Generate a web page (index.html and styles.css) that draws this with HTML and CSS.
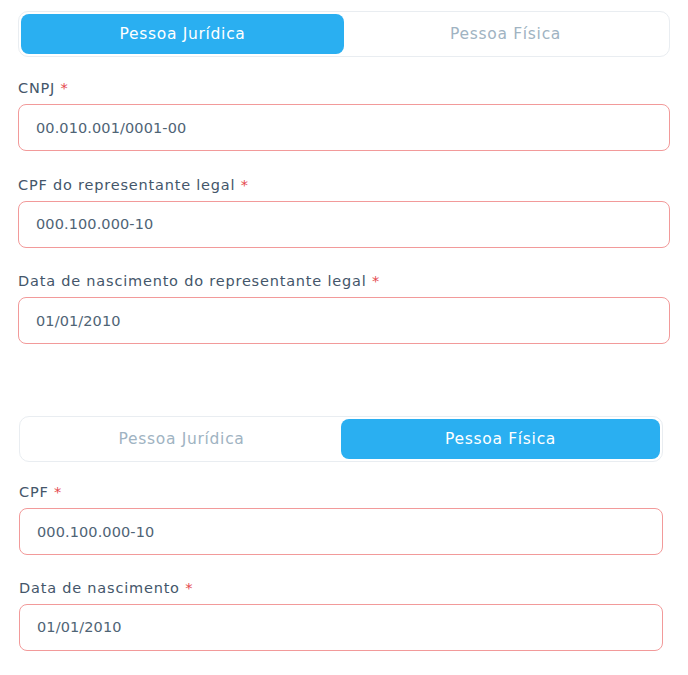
FILE: index.html
```html
<!DOCTYPE html>
<html lang="pt-BR">
<head>
<meta charset="utf-8">
<title>Formulário</title>
<link rel="stylesheet" href="styles.css">
</head>
<body>
  <section class="form form-pj">
    <div class="toggle">
      <button class="tab active">Pessoa Jurídica</button>
      <button class="tab">Pessoa Física</button>
    </div>
    <div class="field">
      <label class="label">CNPJ <span class="req">*</span></label>
      <div class="input">00.010.001/0001-00</div>
    </div>
    <div class="field">
      <label class="label">CPF do representante legal <span class="req">*</span></label>
      <div class="input">000.100.000-10</div>
    </div>
    <div class="field">
      <label class="label">Data de nascimento do representante legal <span class="req">*</span></label>
      <div class="input">01/01/2010</div>
    </div>
  </section>

  <section class="form form-pf">
    <div class="toggle">
      <button class="tab">Pessoa Jurídica</button>
      <button class="tab active">Pessoa Física</button>
    </div>
    <div class="field">
      <label class="label">CPF <span class="req">*</span></label>
      <div class="input">000.100.000-10</div>
    </div>
    <div class="field">
      <label class="label">Data de nascimento <span class="req">*</span></label>
      <div class="input">01/01/2010</div>
    </div>
  </section>
</body>
</html>
```
FILE: styles.css
```css
* { box-sizing: border-box; }
html, body { margin: 0; padding: 0; background: #ffffff; }
body {
  font-family: "DejaVu Sans", "Noto Sans", sans-serif;
  color: #47596a;
}
.form {
  display: flex;
  flex-direction: column;
}
.form-pj {
  margin: 11px 0 0 18px;
  width: 652px;
}
.form-pf {
  margin: 48.5px 0 0 19px;
  width: 644px;
}
.toggle {
  display: grid;
  grid-template-columns: 1fr 1fr;
  height: 46px;
  padding: 2px;
  border: 1px solid #e9edf1;
  border-radius: 10px;
  background: #fff;
  margin-bottom: 21px;
}
.form-pf .toggle { margin-bottom: 20px; }
.tab {
  border: 0;
  background: transparent;
  border-radius: 8px;
  font-family: inherit;
  font-size: 15.5px;
  letter-spacing: 0.7px;
  font-weight: 400;
  color: #a0b3c2;
  cursor: pointer;
  padding: 0;
}
.tab.active {
  background: #2aaff1;
  color: #ffffff;
}
.field {
  display: flex;
  flex-direction: column;
  margin-bottom: 23.5px;
}
.form-pf .field { margin-bottom: 22.5px; }
.label {
  font-size: 14.5px;
  letter-spacing: 0.8px;
  line-height: 20px;
  color: #44566a;
  margin-bottom: 6px;
}
.req { color: #e5484d; }
.input {
  height: 47px;
  border: 1px solid #f29a9a;
  border-radius: 8px;
  padding: 0 17px;
  display: flex;
  align-items: center;
  font-size: 14.5px;
  letter-spacing: 0.1px;
  color: #4f6475;
}
```
